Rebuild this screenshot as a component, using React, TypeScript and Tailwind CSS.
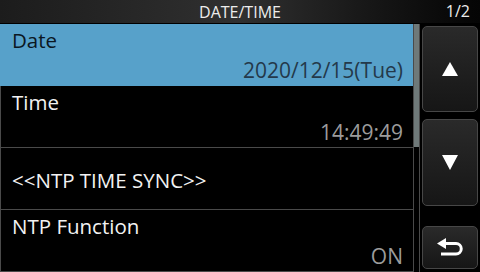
import React from 'react';

interface RowProps {
  label: string;
  value?: string;
  selected?: boolean;
  centered?: boolean;
}

const MenuRow: React.FC<RowProps> = ({ label, value, selected = false, centered = false }) => {
  const rowClass = selected
    ? 'bg-[#57a1ca] border-[#57a1ca]'
    : 'bg-black border-[#4a4a4a]';

  if (centered) {
    return (
      <div className={`h-[62px] border-b border-l flex items-center pl-[11px] pt-[2px] ${rowClass}`}>
        <span className="text-[20.5px] leading-[26px] text-[#f2f2f2]">{label}</span>
      </div>
    );
  }

  return (
    <div className={`h-[62px] border-b border-l flex flex-col pl-[11px] pr-[10px] ${rowClass}`}>
      <div className={`text-[20.5px] leading-[26px] pt-[3px] ${selected ? 'text-[#0b1722]' : 'text-[#f2f2f2]'}`}>
        {label}
      </div>
      <div
        className={`mt-auto text-right text-[21px] leading-[26px] pb-[2px] ${
          selected ? 'text-[#24394a]' : 'text-[#9c9c9c]'
        }`}
      >
        {value}
      </div>
    </div>
  );
};

const SideButton: React.FC<{ className?: string; children: React.ReactNode }> = ({ className = '', children }) => (
  <div
    className={`w-[56px] rounded-[5px] border border-[#474747] bg-gradient-to-b from-[#2a2a2a] to-[#161616] flex items-center justify-center ${className}`}
  >
    {children}
  </div>
);

export default function App() {
  return (
    <div
      className="w-[480px] h-[272px] bg-black flex flex-col overflow-hidden"
      style={{ fontFamily: '"Open Sans", "Noto Sans", sans-serif' }}
    >
      {/* Title bar */}
      <div className="h-[24px] border-b border-black bg-gradient-to-r from-[#1c1c1c] via-[#303030] to-[#050505] relative flex items-center justify-center">
        <span className="text-[16px] leading-[22px] text-[#ececec]">DATE/TIME</span>
        <span className="absolute right-[10px] top-0 text-[16px] leading-[22px] text-[#ececec]">1/2</span>
      </div>

      <div className="flex flex-1">
        {/* Menu list */}
        <div className="w-[413px] flex flex-col">
          <MenuRow label="Date" value="2020/12/15(Tue)" selected />
          <MenuRow label="Time" value="14:49:49" />
          <MenuRow label="<<NTP TIME SYNC>>" centered />
          <MenuRow label="NTP Function" value="ON" />
        </div>

        {/* Scroll bar */}
        <div className="w-[7px] border-l border-r border-[#4a4a4a] flex flex-col">
          <div className="h-[123px] bg-[#6f7979]" />
        </div>

        {/* Buttons */}
        <div className="flex flex-col pl-[2px] pt-[2px]">
          <SideButton className="h-[86px]">
            <svg width="16" height="14" viewBox="0 0 16 14">
              <polygon points="8,0 16,14 0,14" fill="#ffffff" />
            </svg>
          </SideButton>
          <SideButton className="h-[87px] mt-[7px]">
            <svg width="16" height="15" viewBox="0 0 16 15">
              <polygon points="0,0 16,0 8,15" fill="#ffffff" />
            </svg>
          </SideButton>
          <SideButton className="h-[43px] mt-[20px]">
            <svg width="27" height="19" viewBox="0 0 27 19">
              <polygon points="0,5.5 9,0 9,11" fill="#ffffff" />
              <path d="M8 5.5 H19 A5.25 5.25 0 0 1 19 16 H4" fill="none" stroke="#ffffff" strokeWidth="3" />
            </svg>
          </SideButton>
        </div>
      </div>
    </div>
  );
}
